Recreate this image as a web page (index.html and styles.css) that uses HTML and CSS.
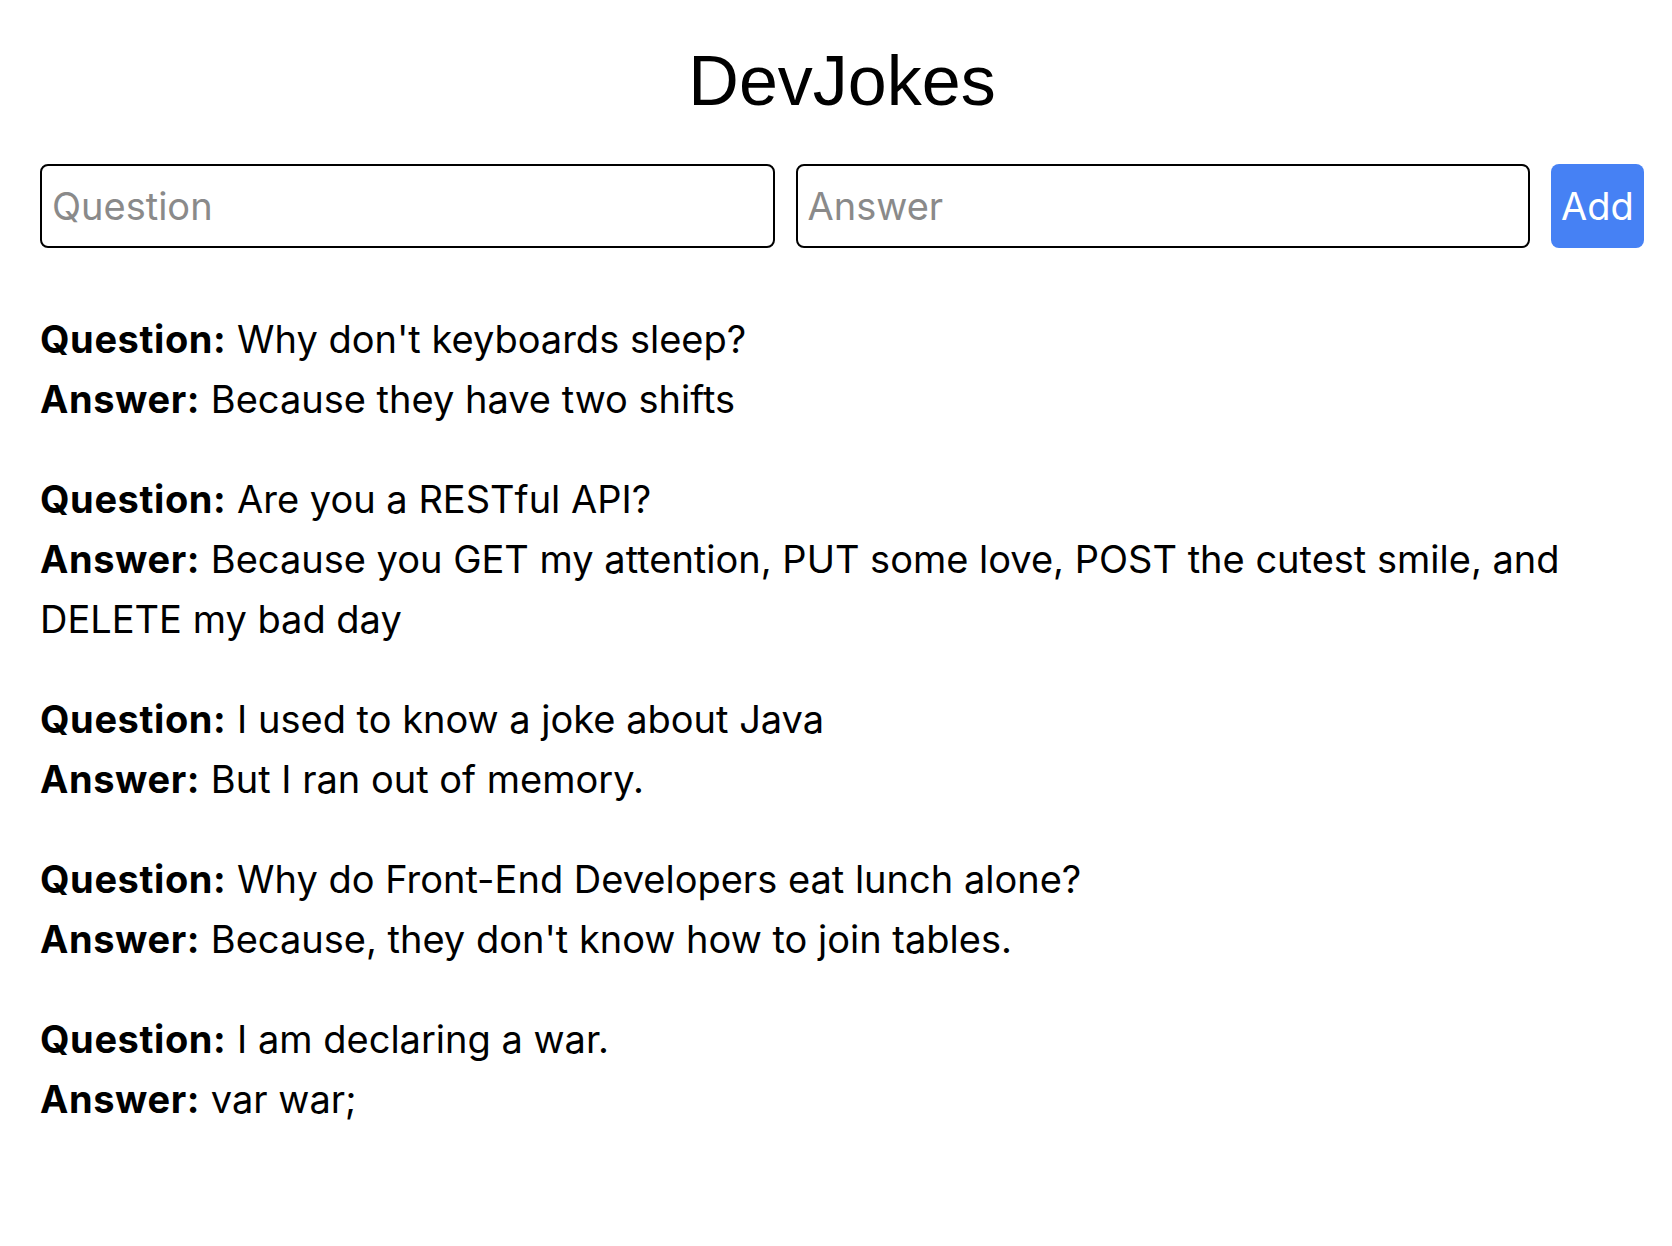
FILE: index.html
```html
<!DOCTYPE html>
<html lang="en">
<head>
<meta charset="utf-8">
<title>DevJokes</title>
<link rel="stylesheet" href="styles.css">
</head>
<body>
<div class="app">
  <h1 class="title">DevJokes</h1>
  <form class="joke-form" onsubmit="return false;">
    <input class="field" type="text" placeholder="Question">
    <input class="field" type="text" placeholder="Answer">
    <button class="add-btn" type="submit">Add</button>
  </form>
  <div class="jokes">
    <div class="joke">
      <p class="line"><b>Question:</b> Why don't keyboards sleep?</p>
      <p class="line"><b>Answer:</b> Because they have two shifts</p>
    </div>
    <div class="joke">
      <p class="line"><b>Question:</b> Are you a RESTful API?</p>
      <p class="line"><b>Answer:</b> Because you GET my attention, PUT some love, POST the cutest smile, and DELETE my bad day</p>
    </div>
    <div class="joke">
      <p class="line"><b>Question:</b> I used to know a joke about Java</p>
      <p class="line"><b>Answer:</b> But I ran out of memory.</p>
    </div>
    <div class="joke">
      <p class="line"><b>Question:</b> Why do Front-End Developers eat lunch alone?</p>
      <p class="line"><b>Answer:</b> Because, they don't know how to join tables.</p>
    </div>
    <div class="joke">
      <p class="line"><b>Question:</b> I am declaring a war.</p>
      <p class="line"><b>Answer:</b> var war;</p>
    </div>
  </div>
</div>
</body>
</html>
```
FILE: styles.css
```css
html, body {
  margin: 0;
  padding: 0;
  background: #fff;
  color: #000;
}
body {
  font-family: Inter, "Noto Sans", sans-serif;
}
.app {
  padding: 41px 28px 0 40px;
}
.title {
  margin: 0;
  font-family: "Liberation Sans", Arial, sans-serif;
  font-weight: 400;
  font-size: 70px;
  line-height: 80px;
  text-align: center;
}
.joke-form {
  display: flex;
  gap: 21px;
  margin-top: 43px;
  height: 84px;
}
.field {
  flex: 1;
  min-width: 0;
  box-sizing: border-box;
  height: 84px;
  border: 2px solid #000;
  border-radius: 8px;
  padding: 0 10px;
  font-family: Inter, "Noto Sans", sans-serif;
  font-size: 38px;
  color: #000;
  outline: none;
}
.field::placeholder {
  color: #8a8a8a;
}
.add-btn {
  width: 93px;
  height: 84px;
  box-sizing: border-box;
  border: none;
  border-radius: 8px;
  background: #4681f4;
  color: #fff;
  font-family: Inter, "Noto Sans", sans-serif;
  font-size: 38px;
  padding: 0;
}
.jokes {
  margin-top: 61px;
  display: flex;
  flex-direction: column;
  gap: 40px;
}
.line {
  margin: 0;
  font-size: 38px;
  line-height: 60px;
}
.line b {
  font-weight: 700;
  letter-spacing: 0.6px;
}
```
